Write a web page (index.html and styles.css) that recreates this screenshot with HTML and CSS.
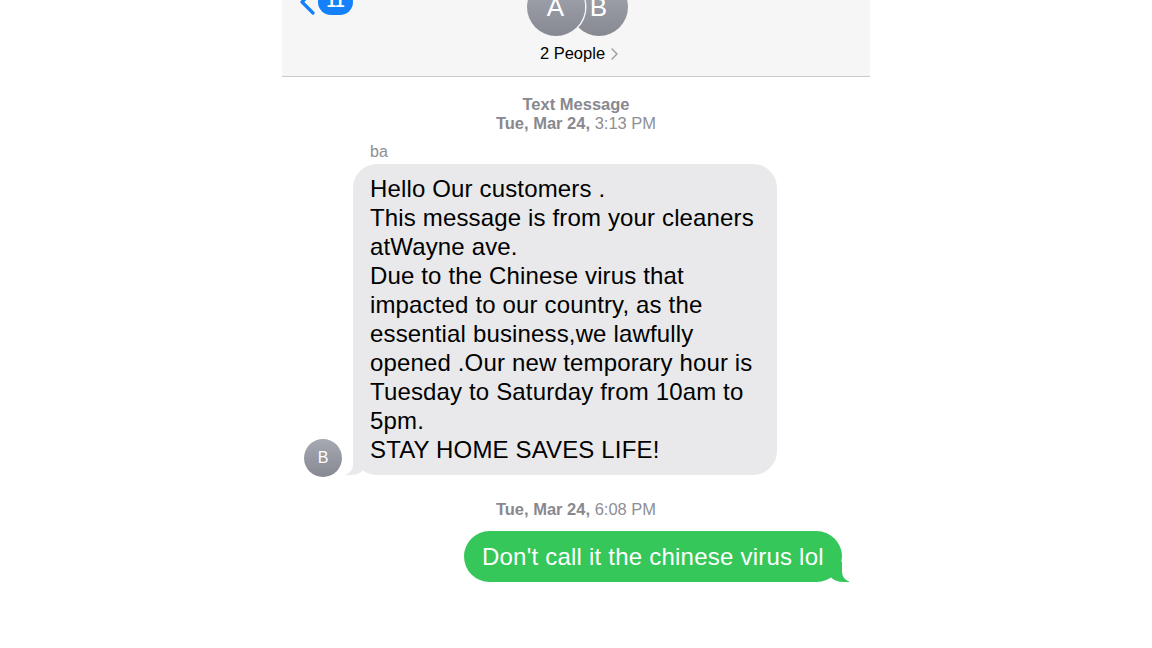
FILE: index.html
```html
<!DOCTYPE html>
<html lang="en">
<head>
<meta charset="utf-8">
<title>Messages</title>
<link rel="stylesheet" href="styles.css">
</head>
<body>
<div class="phone">
  <header class="nav">
    <div class="nav-left">
      <svg class="back" width="18" height="26" viewBox="0 0 18 26"><path d="M15 2 L4 13 L15 24" fill="none" stroke="#1480fa" stroke-width="3.2" stroke-linecap="round" stroke-linejoin="round"/></svg>
      <span class="badge">11</span>
    </div>
    <div class="nav-center">
      <div class="avatars">
        <div class="av av-a">A</div>
        <div class="av av-b">B</div>
      </div>
      <div class="people">2 People <svg class="chev" width="7" height="12" viewBox="0 0 7 12"><path d="M1 1 L6 6 L1 11" fill="none" stroke="#9a9aa0" stroke-width="1.4" stroke-linecap="round" stroke-linejoin="round"/></svg></div>
    </div>
    <div class="nav-right"></div>
  </header>

  <main class="thread">
    <div class="stamp">
      <div><b>Text Message</b></div>
      <div><b>Tue, Mar 24,</b> 3:13 PM</div>
    </div>
    <div class="sender">ba</div>
    <div class="row in-row">
      <div class="mini-av">B</div>
      <div class="bubble in">Hello Our customers .<br>This message is from your cleaners<br>atWayne ave.<br>Due to the Chinese virus that<br>impacted to our country, as the<br>essential business,we lawfully<br>opened .Our new temporary hour is<br>Tuesday to Saturday from 10am to<br>5pm.<br>STAY HOME SAVES LIFE!</div>
    </div>
    <div class="stamp stamp2"><b>Tue, Mar 24,</b> 6:08 PM</div>
    <div class="row out-row">
      <div class="bubble out">Don't call it the chinese virus lol</div>
    </div>
  </main>
</div>
</body>
</html>
```
FILE: styles.css
```css
* { box-sizing: border-box; }
html, body { margin: 0; padding: 0; background: #fff; }
body {
  font-family: "Liberation Sans", Arial, sans-serif;
  color: #000;
}
.phone {
  width: 588px;
  margin: 0 auto;
  height: 648px;
  overflow: hidden;
}
.nav {
  height: 77px;
  background: #f6f6f6;
  border-bottom: 1px solid #c9c9cc;
  display: grid;
  grid-template-columns: 1fr auto 1fr;
}
.nav-left {
  display: flex;
  align-items: flex-start;
  padding-left: 16px;
  margin-top: -11px;
}
.badge {
  margin-left: 2px;
  background: #1480fa;
  color: #fff;
  height: 26px;
  min-width: 35px;
  border-radius: 13px;
  font-size: 17px;
  font-weight: bold;
  line-height: 26px;
  text-align: center;
  padding: 0 8px;
}
.nav-center {
  display: flex;
  flex-direction: column;
  align-items: center;
}
.avatars {
  display: flex;
  margin-top: -22px;
  padding-left: 2px;
}
.av {
  width: 58px;
  height: 58px;
  border-radius: 50%;
  background: linear-gradient(#a7a9b2, #868892);
  color: #fff;
  font-size: 26px;
  display: flex;
  align-items: center;
  justify-content: center;
}
.av-a {
  position: relative;
  z-index: 2;
  box-shadow: 0 0 0 1.5px #f6f6f6;
}
.av-b { margin-left: -15px; }
.people {
  margin-top: 7px;
  font-size: 16.5px;
  line-height: 20px;
  display: flex;
  align-items: center;
  gap: 6px;
  padding-left: 6px;
}
.chev { margin-top: 2px; }

.thread {
  display: flex;
  flex-direction: column;
  padding-top: 18px;
}
.stamp {
  text-align: center;
  color: #8e8e93;
  font-size: 16.5px;
  line-height: 19px;
}
.stamp b { font-weight: bold; color: #88888e; }
.sender {
  margin-top: 9px;
  padding-left: 88px;
  color: #8e8e93;
  font-size: 16px;
  line-height: 19px;
}
.row { display: flex; align-items: flex-end; }
.in-row {
  padding-left: 22px;
  gap: 11px;
  margin-top: 3px;
}
.mini-av {
  width: 38px;
  height: 38px;
  border-radius: 50%;
  background: linear-gradient(#a7a9b2, #868892);
  color: #fff;
  font-size: 16px;
  display: flex;
  align-items: center;
  justify-content: center;
  margin-bottom: -2px;
}
.bubble {
  position: relative;
  font-size: 24px;
  line-height: 29px;
  padding: 10px 17px 11px;
  border-radius: 24px;
  white-space: nowrap;
}
.bubble.in {
  background: #e9e9eb;
  width: 424px;
  letter-spacing: 0.15px;
}
.bubble.in::before {
  content: "";
  position: absolute;
  bottom: 0;
  left: -8px;
  width: 22px;
  height: 20px;
  background: #e9e9eb;
  border-bottom-right-radius: 16px 14px;
}
.bubble.in::after {
  content: "";
  position: absolute;
  bottom: 0;
  left: -10px;
  width: 10px;
  height: 20px;
  background: #fff;
  border-bottom-right-radius: 10px;
}
.stamp2 { margin-top: 25px; }
.out-row {
  justify-content: flex-end;
  padding-right: 28px;
  margin-top: 12px;
}
.bubble.out {
  background: #35c759;
  color: #fff;
  width: 378px;
  padding: 11px 18px;
  border-radius: 26px;
  letter-spacing: 0.22px;
}
.bubble.out::before {
  content: "";
  position: absolute;
  bottom: 0;
  right: -7px;
  width: 22px;
  height: 20px;
  background: #35c759;
  border-bottom-left-radius: 16px 14px;
}
.bubble.out::after {
  content: "";
  position: absolute;
  bottom: 0;
  right: -10px;
  width: 10px;
  height: 20px;
  background: #fff;
  border-bottom-left-radius: 10px;
}
```
